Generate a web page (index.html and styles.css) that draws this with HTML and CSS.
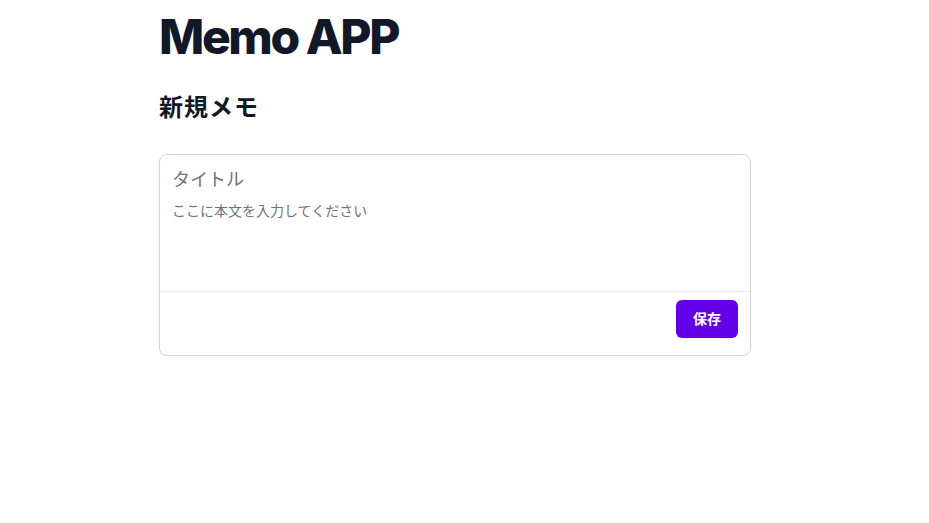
FILE: index.html
```html
<!DOCTYPE html>
<html lang="ja">
<head>
<meta charset="utf-8">
<title>Memo APP</title>
<link rel="stylesheet" href="styles.css">
</head>
<body>
<main class="container">
  <h1 class="app-title">Memo APP</h1>
  <h2 class="section-title">新規メモ</h2>
  <form class="memo-card">
    <input class="memo-title" type="text" placeholder="タイトル">
    <textarea class="memo-body" placeholder="ここに本文を入力してください"></textarea>
    <div class="memo-footer">
      <button type="button" class="save-btn">保存</button>
    </div>
  </form>
</main>
</body>
</html>
```

FILE: styles.css
```css
html, body {
  margin: 0;
  padding: 0;
  background: #ffffff;
}

body {
  font-family: Inter, "Noto Sans CJK JP", sans-serif;
  color: #111827;
}

.container {
  width: 592px;
  margin-left: 159px;
  display: flex;
  flex-direction: column;
}

.app-title {
  margin: 13px 0 0;
  font-size: 48px;
  line-height: 1;
  font-weight: 800;
  letter-spacing: -0.05em;
  color: #111827;
}

.section-title {
  margin: 31px 0 0;
  font-size: 24px;
  line-height: 32px;
  font-weight: 700;
  letter-spacing: 0.04em;
  color: #111827;
}

.memo-card {
  margin-top: 30px;
  border: 1px solid #d1d5db;
  border-radius: 8px;
  box-shadow: 0 1px 2px rgba(0, 0, 0, 0.06);
  display: flex;
  flex-direction: column;
  overflow: hidden;
  background: #fff;
}

.memo-title {
  border: none;
  outline: none;
  padding: 11px 12px 2px;
  font-family: Inter, "Noto Sans CJK JP", sans-serif;
  font-size: 18px;
  line-height: 28px;
  color: #111827;
  background: transparent;
}

.memo-title::placeholder {
  color: #6b7280;
}

.memo-body {
  border: none;
  outline: none;
  resize: none;
  box-sizing: border-box;
  height: 95px;
  padding: 5px 12px 3px;
  font-family: Inter, "Noto Sans CJK JP", sans-serif;
  font-size: 14px;
  line-height: 20px;
  color: #111827;
  background: transparent;
}

.memo-body::placeholder {
  color: #6b7280;
}

.memo-footer {
  border-top: 1px solid #e5e7eb;
  padding: 8px 12px 17px;
  display: flex;
  justify-content: flex-end;
}

.save-btn {
  border: none;
  background: #6200ea;
  color: #ffffff;
  font-family: Inter, "Noto Sans CJK JP", sans-serif;
  font-size: 14px;
  line-height: 20px;
  font-weight: 600;
  padding: 9px 17px;
  border-radius: 6px;
  cursor: pointer;
}
```
